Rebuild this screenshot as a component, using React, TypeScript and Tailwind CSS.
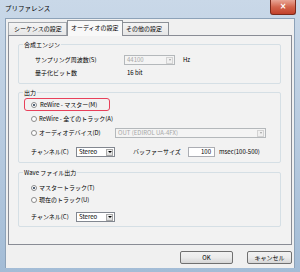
import React from "react";

const font = { fontFamily: '"Noto Sans CJK JP", "Noto Sans", sans-serif' };

function Radio({ checked }: { checked?: boolean }) {
  return (
    <div className="w-[6px] h-[6px] rounded-full border border-[#8b8b8b] bg-white flex items-center justify-center shrink-0">
      {checked ? <div className="w-[2px] h-[2px] rounded-full bg-[#1a2f4a]" /> : null}
    </div>
  );
}

function DisabledCombo({ text, w }: { text: string; w: string }) {
  return (
    <div className={`${w} h-[10px] border border-[#b4b8bb] bg-[#f4f4f4] flex items-center justify-between pl-[2px] pr-[1px]`}>
      <span className="text-[#a7a7a7]">{text}</span>
      <div className="w-[7px] h-[7px] border border-[#d3d3d3] bg-[#f0f0f0] flex items-center justify-center">
        <div className="w-0 h-0 border-l-[1.5px] border-r-[1.5px] border-t-[2px] border-l-transparent border-r-transparent border-t-[#a0a0a0]" />
      </div>
    </div>
  );
}

function Select({ text }: { text: string }) {
  return (
    <div className="w-[39px] h-[10px] border border-[#828790] bg-white flex items-center justify-between pl-[2px] pr-[1px]">
      <span className="text-black">{text}</span>
      <div className="w-[7px] h-[7px] border border-[#a9a9a9] bg-gradient-to-b from-[#f4f4f4] to-[#dcdcdc] flex items-center justify-center">
        <div className="w-0 h-0 border-l-[2px] border-r-[2px] border-t-[2px] border-l-transparent border-r-transparent border-t-black" />
      </div>
    </div>
  );
}

function Group({ label, h, mt, children }: { label: string; h: string; mt: string; children: React.ReactNode }) {
  return (
    <div className={`relative ${mt} ml-[9px] w-[263px] ${h} border border-[#d5dfe5] rounded-[2px]`}>
      <span className="absolute left-[4px] top-[-4px] bg-[#f2f2f2] px-[1px] leading-[7px]">{label}</span>
      {children}
    </div>
  );
}

export default function App() {
  return (
    <div
      className="w-[300px] h-[272px] flex flex-col overflow-hidden bg-gradient-to-b from-[#c9d8e8] via-[#b8cbe0] to-[#a3bcd6] text-[6px] leading-none text-black"
      style={font}
    >
      {/* title bar */}
      <div className="h-[18px] flex items-start justify-between shrink-0">
        <span className="pl-[5px] pt-[5px] text-[6.5px] text-black">プリファレンス</span>
        <div className="mr-[4px] w-[26px] h-[15px] rounded-b-[3px] border border-t-0 border-[#7a2a1c] bg-gradient-to-b from-[#e8a596] via-[#d2644c] to-[#c2402a] flex items-center justify-center">
          <span className="text-white font-bold text-[8px] leading-none" style={{ fontFamily: '"DejaVu Sans", sans-serif' }}>
            ×
          </span>
        </div>
      </div>

      {/* client area */}
      <div className="mx-[5px] h-[250px] bg-[#f0f0f0] flex flex-col shrink-0 border border-[#8da2b8] border-b-0">
        {/* tabs */}
        <div className="h-[16px] pl-[2px] flex items-end shrink-0">
          <div className="w-[59px] h-[13px] border border-b-0 border-[#a4a8ad] bg-gradient-to-b from-[#f4f4f4] to-[#e6e6e6] flex items-center pl-[5px]">
            シーケンスの設定
          </div>
          <div className="relative z-10 mb-[-1px] w-[56px] h-[16px] border border-b-0 border-[#8c9096] bg-[#f8f8f8] flex items-center pl-[3px] pb-[1px]">
            オーディオの設定
          </div>
          <div className="w-[46px] h-[13px] border border-b-0 border-l-0 border-[#8c9096] bg-gradient-to-b from-[#f4f4f4] to-[#e6e6e6] flex items-center pl-[3px]">
            その他の設定
          </div>
        </div>

        {/* panel */}
        <div className="ml-[2px] w-[284px] h-[210px] border border-[#898c95] bg-[#f2f2f2] flex flex-col shrink-0">
          <Group label="合成エンジン" h="h-[40px]" mt="mt-[8px]">
            <div className="pt-[9px] pl-[16px]">
              <div className="h-[12px] flex items-center">
                <span className="w-[89px]">サンプリング周波数(S)</span>
                <DisabledCombo text="44100" w="w-[51px]" />
                <span className="ml-[8px]">Hz</span>
              </div>
              <div className="h-[14px] flex items-center">
                <span className="w-[92px]">量子化ビット数</span>
                <span>16 bit</span>
              </div>
            </div>
          </Group>

          <Group label="出力" h="h-[71px]" mt="mt-[8px]">
            <div className="pt-[5px]">
              <div className="ml-[5px] w-[86px] h-[13px] border border-[#e8405a] rounded-[3px] flex items-center pl-[6px] gap-[3px]">
                <Radio checked />
                <span>ReWire - マスター(M)</span>
              </div>
              <div className="h-[15px] flex items-center pl-[12px] gap-[2px]">
                <Radio />
                <span>ReWire - 全てのトラック(A)</span>
              </div>
              <div className="h-[14px] flex items-center pl-[12px]">
                <Radio />
                <span className="ml-[2px] w-[76px]">オーディオデバイス(D)</span>
                <DisabledCombo text="OUT (EDIROL UA-4FX)" w="w-[151px]" />
              </div>
              <div className="mt-[5px] h-[14px] flex items-center pl-[12px]">
                <span className="w-[45px]">チャンネル(C)</span>
                <Select text="Stereo" />
                <span className="ml-[18px] w-[55px]">バッファーサイズ</span>
                <div className="w-[27px] h-[10px] border border-[#abadb3] bg-white flex items-center justify-end pr-[3px]">
                  100
                </div>
                <span className="ml-[4px]">msec(100-500)</span>
              </div>
            </div>
          </Group>

          <Group label="Wave ファイル出力" h="h-[55px]" mt="mt-[9px]">
            <div className="pt-[9px]">
              <div className="h-[12px] flex items-center pl-[12px] gap-[2px]">
                <Radio checked />
                <span>マスタートラック(T)</span>
              </div>
              <div className="h-[11px] flex items-center pl-[12px] gap-[2px]">
                <Radio />
                <span>現在のトラック(U)</span>
              </div>
              <div className="mt-[6px] h-[12px] flex items-center pl-[12px]">
                <span className="w-[45px]">チャンネル(C)</span>
                <Select text="Stereo" />
              </div>
            </div>
          </Group>
        </div>

        {/* buttons */}
        <div className="mt-[6px] flex justify-end pr-[2px] gap-[14px]">
          <div className="w-[53px] h-[13px] border border-[#707070] rounded-[2px] bg-gradient-to-b from-[#f2f2f2] via-[#ebebeb] to-[#d6d6d6] flex items-center justify-center">
            OK
          </div>
          <div className="w-[45px] h-[13px] border border-[#707070] rounded-[2px] bg-gradient-to-b from-[#f2f2f2] via-[#ebebeb] to-[#d6d6d6] flex items-center justify-center">
            キャンセル
          </div>
        </div>
      </div>
    </div>
  );
}
